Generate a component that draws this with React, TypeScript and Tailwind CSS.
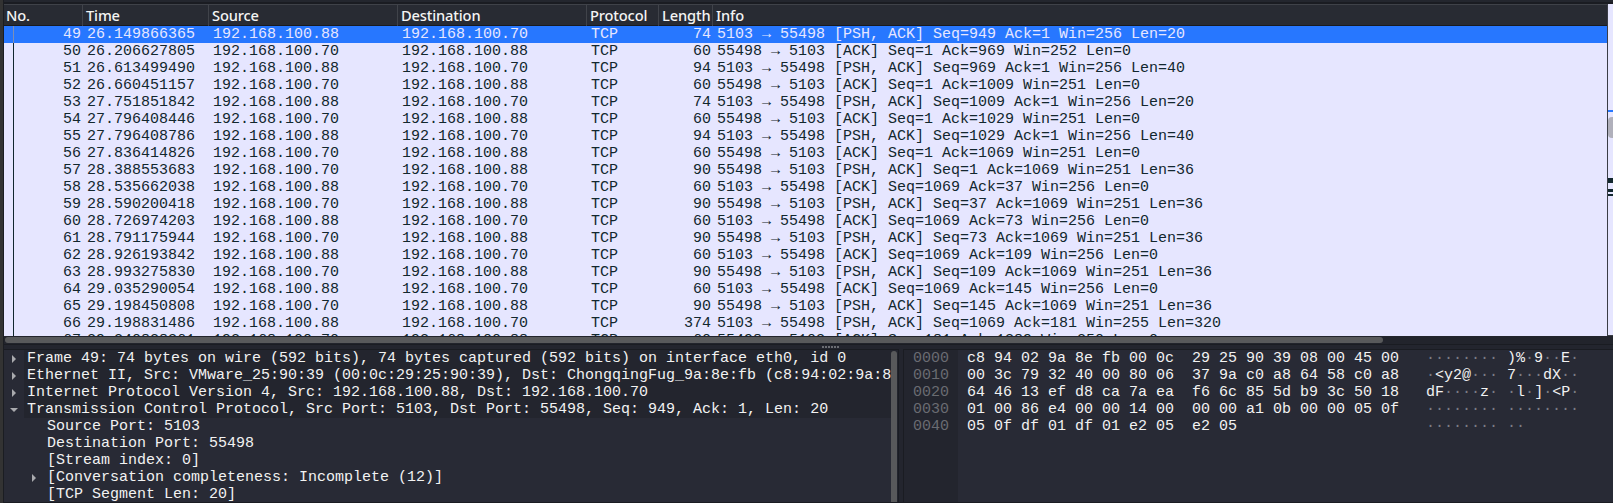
import React from "react";

type Packet = [number, string, 0 | 1, number, string];

const packets: Packet[] = [
  [49, "26.149866365", 1, 74, "[PSH, ACK] Seq=949 Ack=1 Win=256 Len=20"],
  [50, "26.206627805", 0, 60, "[ACK] Seq=1 Ack=969 Win=252 Len=0"],
  [51, "26.613499490", 1, 94, "[PSH, ACK] Seq=969 Ack=1 Win=256 Len=40"],
  [52, "26.660451157", 0, 60, "[ACK] Seq=1 Ack=1009 Win=251 Len=0"],
  [53, "27.751851842", 1, 74, "[PSH, ACK] Seq=1009 Ack=1 Win=256 Len=20"],
  [54, "27.796408446", 0, 60, "[ACK] Seq=1 Ack=1029 Win=251 Len=0"],
  [55, "27.796408786", 1, 94, "[PSH, ACK] Seq=1029 Ack=1 Win=256 Len=40"],
  [56, "27.836414826", 0, 60, "[ACK] Seq=1 Ack=1069 Win=251 Len=0"],
  [57, "28.388553683", 0, 90, "[PSH, ACK] Seq=1 Ack=1069 Win=251 Len=36"],
  [58, "28.535662038", 1, 60, "[ACK] Seq=1069 Ack=37 Win=256 Len=0"],
  [59, "28.590200418", 0, 90, "[PSH, ACK] Seq=37 Ack=1069 Win=251 Len=36"],
  [60, "28.726974203", 1, 60, "[ACK] Seq=1069 Ack=73 Win=256 Len=0"],
  [61, "28.791175944", 0, 90, "[PSH, ACK] Seq=73 Ack=1069 Win=251 Len=36"],
  [62, "28.926193842", 1, 60, "[ACK] Seq=1069 Ack=109 Win=256 Len=0"],
  [63, "28.993275830", 0, 90, "[PSH, ACK] Seq=109 Ack=1069 Win=251 Len=36"],
  [64, "29.035290054", 1, 60, "[ACK] Seq=1069 Ack=145 Win=256 Len=0"],
  [65, "29.198450808", 0, 90, "[PSH, ACK] Seq=145 Ack=1069 Win=251 Len=36"],
  [66, "29.198831486", 1, 374, "[PSH, ACK] Seq=1069 Ack=181 Win=255 Len=320"],
  [67, "29.240828361", 0, 60, "[ACK] Seq=181 Ack=1389 Win=250 Len=0"],
];

const columns = "grid grid-cols-[79px_126px_189px_189px_72px_54px_1fr]";

function PacketRow({ packet, selected }: { packet: Packet; selected: boolean }) {
  const [no, time, outgoing, length, info] = packet;
  return (
    <div
      className={`${columns} h-[17px] shrink-0 ${
        selected ? "bg-[#2777ff] text-[#e6e6ff]" : "text-[#12272e]"
      }`}
    >
      <span className={`ml-[9px] border-l pr-[2px] text-right ${selected ? "border-[#7d8fb5]" : "border-[#12272e]"}`}>
        {no}
      </span>
      <span className="pl-1">{time}</span>
      <span className="pl-1">{outgoing ? "192.168.100.88" : "192.168.100.70"}</span>
      <span className="pl-1">{outgoing ? "192.168.100.70" : "192.168.100.88"}</span>
      <span className="pl-1">TCP</span>
      <span className="pr-[2px] text-right">{length}</span>
      <span className="pl-1">
        {outgoing ? "5103" : "55498"}
        <span className="inline-block w-[27px] text-center">→</span>
        {outgoing ? "55498" : "5103"} {info}
      </span>
    </div>
  );
}

const headings = ["No.", "Time", "Source", "Destination", "Protocol", "Length", "Info"];

function PacketList() {
  return (
    <section className="flex h-[332px] w-full">
      <div className="flex min-w-0 flex-1 flex-col overflow-hidden bg-[#e6e6ff]">
        <header
          className={`${columns} h-[22px] shrink-0 border-t border-b border-t-[#3f4249] border-b-[#191b20] bg-[#282b33] font-['Noto_Sans',sans-serif] text-[14.67px] leading-[21px] font-medium tracking-[-0.15px] text-[#f4f4f4]`}
        >
          {headings.map((h) => (
            <span key={h} className="border-r border-[#40434a] pl-[3px] first:pl-[2px] last:border-r-0">
              {h}
            </span>
          ))}
        </header>
        {packets.map((p, i) => (
          <PacketRow key={p[0]} packet={p} selected={i === 0} />
        ))}
      </div>
      <div className="flex w-[6px] flex-col border-b border-l border-[#3a3d45] bg-[#e6e6ff]">
        <div className="mt-[106px] h-[2px] bg-[#2777ff]" />
        <div className="mt-[5px] h-[21px] rounded-l-sm bg-[#b0b0bb]" />
        <div className="mt-[40px] h-[5px] bg-[#12272e]" />
        <div className="mt-[6px] h-[3px] bg-[#12272e]" />
        <div className="mt-[2px] h-[2px] bg-[#12272e]" />
      </div>
    </section>
  );
}

type Node = { text: string; arrow?: "right" | "down"; child?: boolean };

const nodes: Node[] = [
  { text: "Frame 49: 74 bytes on wire (592 bits), 74 bytes captured (592 bits) on interface eth0, id 0", arrow: "right" },
  { text: "Ethernet II, Src: VMware_25:90:39 (00:0c:29:25:90:39), Dst: ChongqingFug_9a:8e:fb (c8:94:02:9a:8", arrow: "right" },
  { text: "Internet Protocol Version 4, Src: 192.168.100.88, Dst: 192.168.100.70", arrow: "right" },
  { text: "Transmission Control Protocol, Src Port: 5103, Dst Port: 55498, Seq: 949, Ack: 1, Len: 20", arrow: "down" },
  { text: "Source Port: 5103", child: true },
  { text: "Destination Port: 55498", child: true },
  { text: "[Stream index: 0]", child: true },
  { text: "[Conversation completeness: Incomplete (12)]", child: true, arrow: "right" },
  { text: "[TCP Segment Len: 20]", child: true },
];

function Arrow({ kind }: { kind?: "right" | "down" }) {
  return (
    <span className="flex h-[17px] w-5 shrink-0 items-center justify-center">
      {kind && (
        <svg width="8" height="8" viewBox="0 0 8 8" className="mt-px" fill="#a9aaae">
          {kind === "right" ? <path d="M2 0 L6 4 L2 8 Z" /> : <path d="M0 2 H8 L4 6 Z" />}
        </svg>
      )}
    </span>
  );
}

function DetailTree() {
  return (
    <section className="flex w-[895px] shrink-0 border-t border-r border-[#1a1c22] bg-[#282a35] text-[#f2f2f2]">
      <div className="min-w-0 flex-1 overflow-hidden">
        {nodes.map((n) => (
          <div key={n.text} className={`flex h-[17px] whitespace-pre ${n.child ? "pl-5" : ""}`}>
            <Arrow kind={n.arrow} />
            <span className={`flex-1 pl-[3px] ${n.child ? "" : "bg-[#23252e]"}`}>{n.text}</span>
          </div>
        ))}
      </div>
      <div className="flex w-[7px] bg-[#23252e] pt-px">
        <div className="w-[6px] rounded-t-full bg-[#58595b]" />
      </div>
    </section>
  );
}

const dump = [
  ["0000", "c8 94 02 9a 8e fb 00 0c  29 25 90 39 08 00 45 00", "········ )%·9··E·"],
  ["0010", "00 3c 79 32 40 00 80 06  37 9a c0 a8 64 58 c0 a8", "·<y2@··· 7···dX··"],
  ["0020", "64 46 13 ef d8 ca 7a ea  f6 6c 85 5d b9 3c 50 18", "dF····z· ·l·]·<P·"],
  ["0030", "01 00 86 e4 00 00 14 00  00 00 a1 0b 00 00 05 0f", "········ ········"],
  ["0040", "05 0f df 01 df 01 e2 05  e2 05", "········ ··"],
];

function HexDump() {
  return (
    <section className="ml-[4px] flex min-w-0 flex-1 border-t border-l border-[#1a1c22] bg-[#282a35] whitespace-pre text-[#f2f2f2]">
      <div className="w-[54px] bg-[#23252e] pl-[9px] text-[#6a6c72]">
        {dump.map((r) => (
          <div key={r[0]} className="h-[17px]">{r[0]}</div>
        ))}
      </div>
      <div className="w-[468px] pl-[9px]">
        {dump.map((r) => (
          <div key={r[0]} className="h-[17px]">{r[1]}</div>
        ))}
      </div>
      <div>
        {dump.map((r) => (
          <div key={r[0]} className="h-[17px]">
            {r[2].split(/(·+)/).map((s, i) => (
              <span key={i} className={s.startsWith("·") ? "text-[#7b7d84]" : ""}>{s}</span>
            ))}
          </div>
        ))}
      </div>
    </section>
  );
}

export default function App() {
  return (
    <div className="flex h-[503px] w-[1613px] overflow-hidden bg-[#23252e] font-['Liberation_Mono',monospace] text-[15px] leading-[17px]">
      <div className="w-[4px] shrink-0 border-r border-[#1b1d22] bg-[#333333]" />
      <main className="flex min-w-0 flex-1 flex-col">
        <div className="h-[4px] shrink-0 border-b-2 border-[#1a1c22] bg-[#23262e]" />
        <PacketList />
        <div className="flex h-[9px] shrink-0 border-b border-[#1a1c22] bg-[#22242c] pt-px">
          <div className="ml-px h-[6px] w-[1378px] rounded-full bg-[#58595b]" />
        </div>
        <div className="flex h-[4px] shrink-0 items-center gap-px pl-[818px]">
          {[0, 1, 2, 3, 4, 5].map((d) => (
            <span key={d} className="size-[2px] bg-[#6b6d73]" />
          ))}
        </div>
        <div className="flex h-[154px] border-b border-[#1a1c22]">
          <DetailTree />
          <HexDump />
        </div>
      </main>
    </div>
  );
}
